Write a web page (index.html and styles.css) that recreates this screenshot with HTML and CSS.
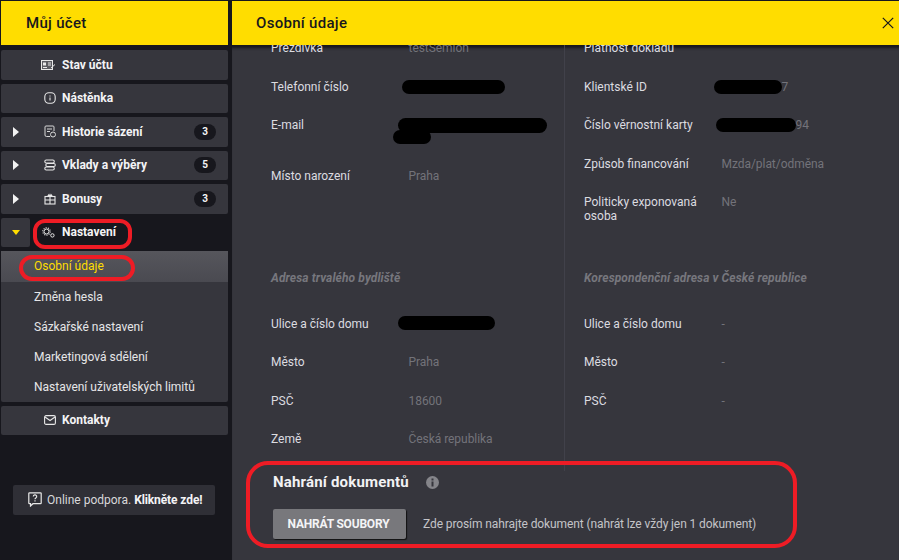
FILE: index.html
```html
<!DOCTYPE html>
<html lang="cs">
<head>
<meta charset="utf-8">
<title>Osobní údaje</title>
<link rel="stylesheet" href="styles.css">
</head>
<body>
<div class="app">
  <aside class="sidebar">
    <header class="bar bar-side"><h2 class="bar-title">Můj účet</h2></header>
    <nav class="nav">
      <a class="item"><span class="caret"></span><span class="ico"><svg class="ico-wide" width="15" height="12" viewBox="0 0 15 12" fill="none" stroke="#e8e8e8" stroke-width="1"><rect x="0.500" y="1.500" width="11" height="9" fill="#5c5c62"/><rect x="2" y="3.500" width="3" height="3" fill="#e8e8e8" stroke="none"/><path d="M2 8.500h4M7 4h3M7 6h3M10 9l4-3.500"/></svg></span><span class="item-label">Stav účtu</span></a>
      <a class="item"><span class="caret"></span><span class="ico"><svg width="12" height="12" viewBox="0 0 12 12" fill="none" stroke="#e8e8e8" stroke-width="1.100"><rect x="0.800" y="0.800" width="10.400" height="10.400" rx="4"/><path d="M6 3.500v1M6 5.500v3"/></svg></span><span class="item-label">Nástěnka</span></a>
      <a class="item"><span class="caret caret-right"></span><span class="ico"><svg width="12" height="13" viewBox="0 0 12 13" fill="none" stroke="#d8d8d8" stroke-width="1"><path d="M6 11.500H2.500a1.500 1.500 0 0 1-1.500-1.500V2a1 1 0 0 1 1-1h7a1 1 0 0 1 1 1v4"/><path d="M3 4h5M3 6.500h3"/><circle cx="9" cy="9.500" r="2.500"/></svg></span><span class="item-label">Historie sázení</span><span class="badge">3</span></a>
      <a class="item"><span class="caret caret-right"></span><span class="ico"><svg width="12" height="12" viewBox="0 0 12 12" fill="none" stroke="#e8e8e8" stroke-width="1.100"><rect x="0.800" y="1" width="9.500" height="3" rx="1.500"/><rect x="1.800" y="4.500" width="9.500" height="3" rx="1.500"/><rect x="0.800" y="8" width="9.500" height="3" rx="1.500"/></svg></span><span class="item-label">Vklady a výběry</span><span class="badge">5</span></a>
      <a class="item"><span class="caret caret-right"></span><span class="ico"><svg width="12" height="12" viewBox="0 0 12 12" fill="none" stroke="#e8e8e8" stroke-width="1.100"><rect x="1" y="3.500" width="10" height="7.500"/><path d="M1 7h10M6 3.500V11M3.500 3.500 5 1.500l1 2 1-2 1.500 2"/></svg></span><span class="item-label">Bonusy</span><span class="badge">3</span></a>

      <a class="item-open">
        <span class="caret-box"><span class="caret-down"></span></span>
        <span class="ico ico-open"><svg width="13" height="11" viewBox="0 0 13 11" fill="none" stroke="#e8e8e8"><circle cx="4.500" cy="4.500" r="2.500" stroke-width="1"/><circle cx="4.500" cy="4.500" r="3.700" stroke-dasharray="1.100 1.200" stroke-width="1.100"/><circle cx="10.400" cy="8.400" r="1.700" stroke-width="1"/></svg></span>
        <span class="item-label">Nastavení</span>
      </a>
      <div class="submenu">
        <a class="sub sub-active">Osobní údaje</a>
        <a class="sub">Změna hesla</a>
        <a class="sub">Sázkařské nastavení</a>
        <a class="sub">Marketingová sdělení</a>
        <a class="sub">Nastavení uživatelských limitů</a>
      </div>
      <a class="item"><span class="caret"></span><span class="ico"><svg width="12" height="10" viewBox="0 0 12 10" fill="none" stroke="#e8e8e8" stroke-width="1.100"><rect x="0.600" y="0.600" width="10.800" height="8.800" rx="1.500"/><path d="M1 2l5 3.500L11 2"/></svg></span><span class="item-label">Kontakty</span></a>
    </nav>
    <a class="support">
      <svg class="support-ico" width="14" height="15" viewBox="0 0 14 15" fill="none" stroke="#e8e8e8" stroke-width="1.200"><path d="M1.500 0.800h11a.7.7 0 0 1 .7.7v9.500a.7.7 0 0 1-.7.7H5l-2.500 2.300v-2.300h-1a.7.7 0 0 1-.7-.7V1.500a.7.7 0 0 1 .7-.7z"/><path d="M5.300 4.500a1.700 1.700 0 1 1 2.500 1.500c-.6.400-.8.700-.8 1.300M7 8.300v1.200"/></svg>
      <span>Online podpora. <b>Klikněte zde!</b></span>
    </a>
    <span class="mark mark-settings"></span>
    <span class="mark mark-personal"></span>
  </aside>

  <main class="main">
    <header class="bar bar-main">
      <h1 class="bar-title">Osobní údaje</h1>
      <svg class="close" width="12" height="12" viewBox="0 0 12 12" fill="none" stroke="#17171d" stroke-width="1.200"><path d="M.8.800l10.400 10.400M11.200.800.800 11.200"/></svg>
    </header>
    <div class="panel">
      <div class="columns">
        <section class="col col-left">
          <div class="block">
            <div class="row"><span class="label">Přezdívka</span><span class="value">testSemion</span></div>
            <div class="row"><span class="label">Telefonní číslo</span><span class="value"><i class="redact r-phone"></i></span></div>
            <div class="row row-tall"><span class="label">E-mail</span><span class="value value-stack"><i class="redact r-mail1"></i><i class="redact r-mail2"></i></span></div>
            <div class="row"><span class="label">Místo narození</span><span class="value">Praha</span></div>
          </div>
          <h3 class="addr-title">Adresa trvalého bydliště</h3>
          <div class="row"><span class="label">Ulice a číslo domu</span><span class="value"><i class="redact r-street"></i></span></div>
          <div class="row"><span class="label">Město</span><span class="value">Praha</span></div>
          <div class="row"><span class="label">PSČ</span><span class="value">18600</span></div>
          <div class="row"><span class="label">Země</span><span class="value">Česká republika</span></div>
        </section>
        <section class="col col-right">
          <div class="block">
            <div class="row"><span class="label">Platnost dokladu</span><span class="value"></span></div>
            <div class="row"><span class="label">Klientské ID</span><span class="value"><i class="redact r-client"></i>7</span></div>
            <div class="row"><span class="label">Číslo věrnostní karty</span><span class="value"><i class="redact r-card"></i>94</span></div>
            <div class="row"><span class="label">Způsob financování</span><span class="value">Mzda/plat/odměna</span></div>
            <div class="row"><span class="label">Politicky exponovaná osoba</span><span class="value">Ne</span></div>
          </div>
          <h3 class="addr-title">Korespondenční adresa v České republice</h3>
          <div class="row"><span class="label">Ulice a číslo domu</span><span class="value">-</span></div>
          <div class="row"><span class="label">Město</span><span class="value">-</span></div>
          <div class="row"><span class="label">PSČ</span><span class="value">-</span></div>
        </section>
      </div>
      <section class="upload">
        <div class="upload-head">
          <h2 class="upload-title">Nahrání dokumentů</h2>
          <svg width="13" height="13" viewBox="0 0 13 13"><circle cx="6.500" cy="6.500" r="6.500" fill="#85858a"/><rect x="5.500" y="5.500" width="2" height="5" fill="#36363d"/><rect x="5.500" y="2.500" width="2" height="2" fill="#36363d"/></svg>
        </div>
        <div class="upload-body">
          <button class="btn" type="button">Nahrát soubory</button>
          <span class="upload-note">Zde prosím nahrajte dokument (nahrát lze vždy jen 1 dokument)</span>
        </div>
      </section>
      <span class="mark mark-upload"></span>
    </div>
  </main>
</div>
</body>
</html>
```

FILE: styles.css
```css
* { box-sizing: border-box; }
html, body { margin: 0; height: 100%; }
body {
  background: #17171d;
  color: #e6e6e8;
  font-family: Roboto, "Liberation Sans", sans-serif;
  font-size: 12px;
  overflow: hidden;
}
h1, h2, h3 { margin: 0; }
.app {
  display: grid;
  grid-template-columns: 232px 1fr;
  height: 560px;
  overflow: hidden;
}

/* Yellow title bars */
.bar {
  background: #ffdd00;
  height: 44px;
  margin-top: 1px;
  display: flex;
  align-items: center;
  justify-content: space-between;
  padding-left: 25px;
}
.bar-side { margin-left: 1px; }
.bar-main { padding-left: 24px; padding-right: 5px; position: relative; z-index: 2; }
.bar-title { font-size: 15px; font-weight: 500; color: #17171d; letter-spacing: .3px; }

/* Sidebar */
.sidebar { position: relative; padding-right: 4px; }
.nav { display: flex; flex-direction: column; gap: 4px; padding: 5px 0 0 1px; }
.item {
  display: flex;
  align-items: center;
  height: 29.500px;
  background: #36363d;
  border-radius: 2px;
}
.caret { width: 31px; flex: none; display: flex; justify-content: center; padding-right: 1px; }
.caret-right::before {
  content: "";
  border-left: 6px solid #f2f2f2;
  border-top: 5px solid transparent;
  border-bottom: 5px solid transparent;
}
.ico { width: 30px; flex: none; display: flex; justify-content: center; padding: 0 6px 0 11px; }
.ico-wide { flex: none; margin: 0 0 0 -2px; }
.ico-open { width: 32px; padding: 0 7px 0 12px; }
.item-label { font-weight: 700; color: #f4f4f6; flex: 1; }
.badge {
  width: 22px;
  height: 16px;
  margin-right: 12px;
  border-radius: 8px;
  background: #17171d;
  color: #f4f4f6;
  font-size: 10px;
  font-weight: 700;
  line-height: 16px;
  text-align: center;
}
.item-open { display: flex; align-items: center; height: 29.500px; }
.caret-box {
  width: 29px;
  height: 100%;
  flex: none;
  display: flex;
  align-items: center;
  justify-content: center;
  background: #36363d;
  border-radius: 2px;
}
.caret-down {
  border-top: 5px solid #ffdd00;
  border-left: 4.500px solid transparent;
  border-right: 4.500px solid transparent;
}
.submenu { background: #36363d; border-radius: 2px; display: flex; flex-direction: column; }
.sub {
  height: 30px;
  padding-left: 33px;
  display: flex;
  align-items: center;
  color: #e6e6e8;
}
.sub-active { background: linear-gradient(#56565c, #4a4a51); color: #ffdd00; height: 30.700px; }
.support {
  display: flex;
  align-items: center;
  gap: 5px;
  height: 30px;
  margin: 49.500px 13px 0 13px;
  padding-left: 15px;
  background: #2f2f36;
  border-radius: 2px;
  color: #d8d8da;
}
.support b { color: #f4f4f6; letter-spacing: -.1px; }
.support-ico { flex: none; }

/* Main */
.main { display: flex; flex-direction: column; height: 560px; min-width: 0; }
.panel { flex: 1; position: relative; background: #36363d; overflow: hidden; box-shadow: inset 0 5px 3px -2px #17171d; }
.columns { display: grid; grid-template-columns: 333px 1fr; margin-top: -3.700px; height: 429px; }
.col-left { padding-left: 39px; border-right: 1px solid #41414a; }
.col-right { padding-left: 19px; }
.block { height: 229.500px; }
.row { display: flex; height: 38.500px; line-height: 14px; }
.row-tall { height: 50.500px; }
.label { width: 137.500px; flex: none; padding-right: 20px; color: #dcdce0; }
.value { color: #73737a; display: flex; align-items: flex-start; letter-spacing: -.05px; }
.value-stack { flex-direction: column; }
.redact { display: block; background: #000; border-radius: 8px; height: 14px; flex: none; font-style: normal; }
.r-phone { width: 103px; margin-left: -7px; margin-top: 0; }
.r-mail1 { width: 149px; height: 15px; margin-left: -11px; margin-top: 0; }
.r-mail2 { width: 38px; margin-left: -16px; margin-top: -3px; }
.r-street { width: 97px; margin-left: -11px; margin-top: -1px; }
.r-client { width: 68px; margin-left: -8px; }
.r-card { width: 80px; margin-left: -6px; }
.addr-title {
  height: 46px;
  font-size: 12px;
  font-weight: 700;
  font-style: italic;
  line-height: 14px;
  letter-spacing: .1px;
  color: #77777d;
}

/* Upload */
.upload { padding: 0 0 0 41px; }
.upload-head { display: flex; align-items: center; gap: 17.500px; height: 18px; margin-top: 3px; }
.upload-title { font-size: 15px; font-weight: 700; color: #f2f2f4; line-height: 18px; letter-spacing: .18px; }
.upload-body { display: flex; align-items: center; gap: 17px; margin-top: 18px; }
.btn {
  width: 133px;
  height: 30px;
  border: 0;
  border-radius: 2px;
  background: #78787c;
  box-shadow: 1px 1px 1px #111;
  color: #f4f4f6;
  font-family: inherit;
  font-size: 12px;
  font-weight: 700;
  letter-spacing: -.2px;
  text-transform: uppercase;
  padding: 0 2px 0 0;
}
.upload-note { color: #c4c4c8; letter-spacing: -.1px; }
.close { flex: none; }

/* Red hand-drawn annotations */
.mark { position: absolute; border: 4px solid #ee1c25; pointer-events: none; }
.mark-settings { left: 33px; top: 219px; width: 99px; height: 30px; border-radius: 12px; }
.mark-personal { left: 19px; top: 255px; width: 116px; height: 26px; border-radius: 13px; }
.mark-upload { left: 14px; top: 416px; width: 551px; height: 87px; border-radius: 22px; }
```
